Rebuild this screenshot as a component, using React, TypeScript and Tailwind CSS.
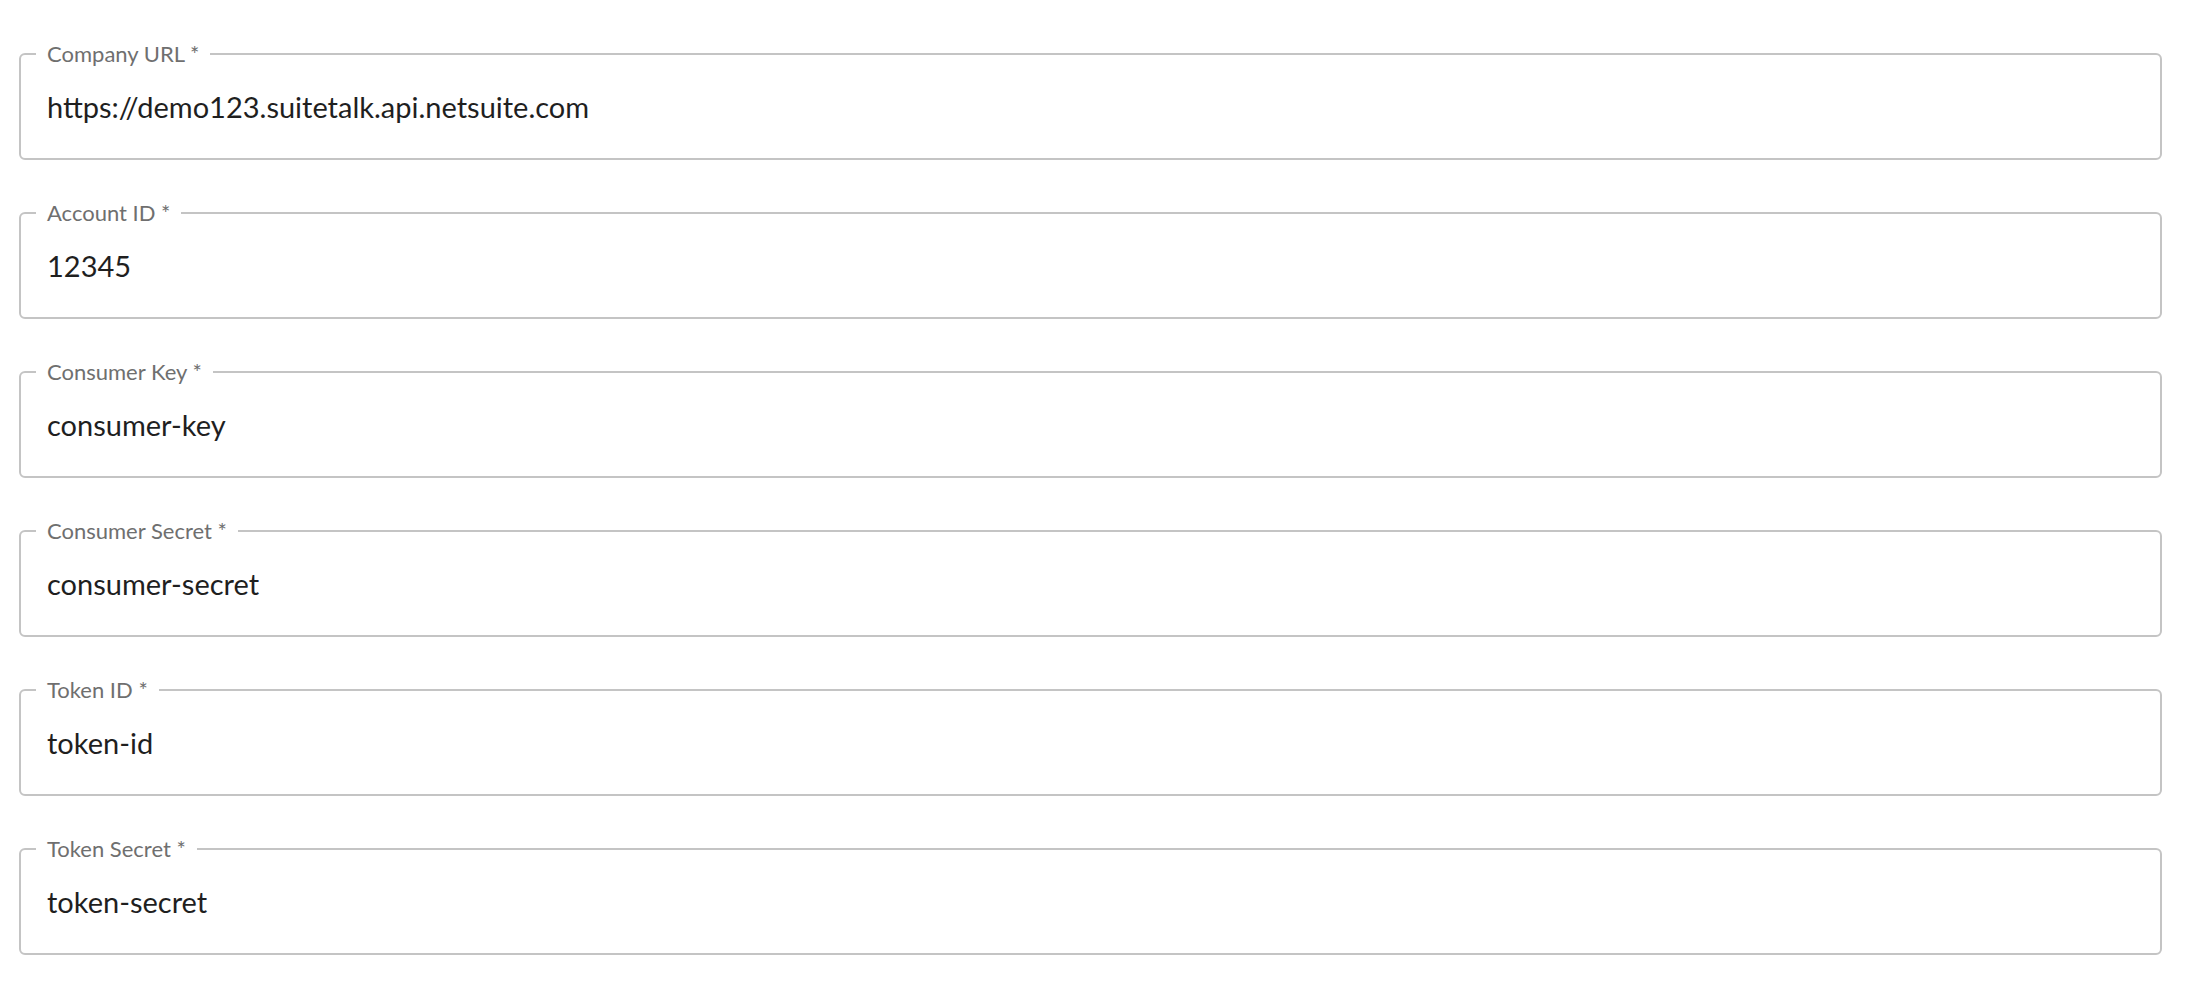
import { useState } from 'react';

interface Field {
  key: string;
  label: string;
  value: string;
}

const FIELDS: Field[] = [
  { key: 'companyUrl', label: 'Company URL', value: 'https://demo123.suitetalk.api.netsuite.com' },
  { key: 'accountId', label: 'Account ID', value: '12345' },
  { key: 'consumerKey', label: 'Consumer Key', value: 'consumer-key' },
  { key: 'consumerSecret', label: 'Consumer Secret', value: 'consumer-secret' },
  { key: 'tokenId', label: 'Token ID', value: 'token-id' },
  { key: 'tokenSecret', label: 'Token Secret', value: 'token-secret' },
];

function OutlinedField({ label, value, onChange }: { label: string; value: string; onChange: (v: string) => void }) {
  return (
    <div className="relative h-[107px] rounded-[6px] border-2 border-[#c4c4c4] flex items-center px-[26px]">
      {/* notched label sitting on the top border */}
      <label className="absolute -top-[13px] left-[15px] px-[11px] bg-white text-[22px] leading-[24px] text-[#6f6f6f]">
        {label} *
      </label>
      <input
        value={value}
        onChange={(e) => onChange(e.target.value)}
        className="w-full bg-transparent outline-none text-[29px] text-[#1f1f1f]"
      />
    </div>
  );
}

export default function App() {
  const [values, setValues] = useState<Record<string, string>>(
    Object.fromEntries(FIELDS.map((f) => [f.key, f.value]))
  );

  return (
    <div className="min-h-screen bg-white pt-[53px] pl-[19px] pr-[36px] font-['Lato',sans-serif]">
      <div className="flex flex-col gap-[52px]">
        {FIELDS.map((field) => (
          <OutlinedField
            key={field.key}
            label={field.label}
            value={values[field.key]}
            onChange={(v) => setValues({ ...values, [field.key]: v })}
          />
        ))}
      </div>
    </div>
  );
}
